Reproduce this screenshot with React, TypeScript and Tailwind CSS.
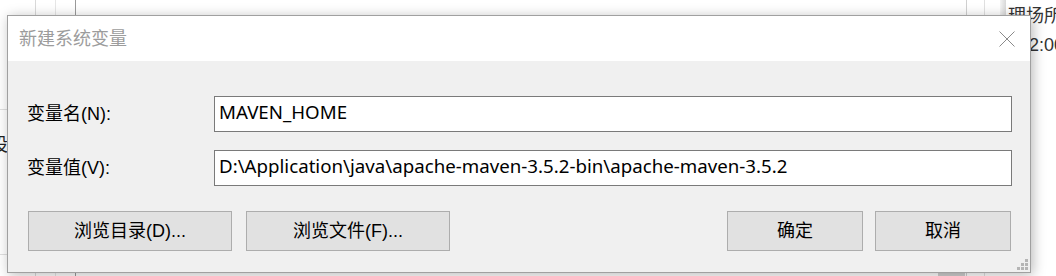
import React from "react";

const font = { fontFamily: '"Liberation Sans", "Noto Sans CJK SC", sans-serif' };
const inputFont = { fontFamily: '"Noto Sans", "Noto Sans CJK SC", sans-serif' };

function Btn({ label, w }: { label: string; w: string }) {
  return (
    <div
      className={`${w} h-[40px] flex items-center justify-center border border-[#adadad] bg-[#e1e1e1] text-[18px] text-black`}
    >
      {label}
    </div>
  );
}

export default function App() {
  return (
    <div className="relative w-[1056px] h-[276px] bg-white overflow-hidden" style={font}>
      {/* background window pieces */}
      <div className="absolute left-[35px] top-0 h-full w-px bg-[#d9d9d9]" />
      <div className="absolute left-[55px] top-0 h-full w-px bg-[#e6e6e6]" />
      <div className="absolute left-[75px] top-0 h-full w-px bg-[#9a9a9a]" />
      <div className="absolute left-0 top-[109px] w-[10px] h-px bg-[#e0e0e0]" />
      <div className="absolute left-0 top-[254px] w-[10px] h-px bg-[#e0e0e0]" />
      <div className="absolute left-[-10px] top-[136px] text-[18px] text-[#222] leading-none">设</div>
      <div className="absolute left-[938px] top-[273px] w-[27px] h-[3px] bg-[#cfcfcf]" />
      <div className="absolute left-[966px] top-0 h-full w-px bg-[#d0d0d0]" />
      <div className="absolute left-[984px] top-0 h-full w-px bg-[#e0e0e0]" />
      <div className="absolute left-[1000px] top-0 h-[15px] w-[6px] bg-gradient-to-r from-[#f4f4f4] to-[#d8d8d8]" />
      <div className="absolute left-[1008px] top-[7px] text-[18px] text-[#333] leading-none whitespace-nowrap">理场所</div>
      <div className="absolute left-[1029px] top-[36px] text-[18px] text-[#333] leading-none whitespace-nowrap">2:00</div>

      {/* dialog */}
      <div className="absolute left-[7px] top-[15px] w-[1024px] h-[258px] border border-[#a0a0a0] bg-[#f0f0f0] flex flex-col shadow-[2px_2px_12px_rgba(0,0,0,0.28)]">
        <div className="h-[45px] bg-white flex items-center justify-between pl-[11px] pr-[15px]">
          <span className="text-[18px] text-[#9c9c9c] leading-none">新建系统变量</span>
          <svg width="16" height="16" viewBox="0 0 16 16">
            <path d="M0.5 0.5 L15.5 15.5 M15.5 0.5 L0.5 15.5" stroke="#8a8a8a" strokeWidth="1" fill="none" />
          </svg>
        </div>
        <div className="flex-1 relative flex flex-col pt-[35px]">
          <div className="flex items-center">
            <div className="w-[206px] pl-[19px] text-[18px] text-black leading-none">变量名(N):</div>
            <div
              className="flex-1 mr-[18px] h-[36px] border border-[#7a7a7a] bg-white flex items-center px-[4px] pb-[3px] text-[18.7px] text-black leading-none whitespace-nowrap"
              style={inputFont}
            >
              MAVEN_HOME
            </div>
          </div>
          <div className="flex items-center mt-[18px]">
            <div className="w-[206px] pl-[19px] text-[18px] text-black leading-none">变量值(V):</div>
            <div
              className="flex-1 mr-[18px] h-[36px] border border-[#7a7a7a] bg-white flex items-center px-[4px] pb-[3px] text-[18.7px] text-black leading-none whitespace-nowrap"
              style={inputFont}
            >
              D:\Application\java\apache-maven-3.5.2-bin\apache-maven-3.5.2
            </div>
          </div>
          <div className="flex items-center mt-[25px] pl-[20px] pr-[19px]">
            <Btn label="浏览目录(D)..." w="w-[204px]" />
            <div className="w-[14px]" />
            <Btn label="浏览文件(F)..." w="w-[204px]" />
            <div className="flex-1" />
            <Btn label="确定" w="w-[136px]" />
            <div className="w-[12px]" />
            <Btn label="取消" w="w-[136px]" />
          </div>
          <svg className="absolute right-[1px] bottom-[1px]" width="12" height="12" viewBox="0 0 12 12">
            <rect x="8" y="0" width="3" height="3" fill="#b5b5b5" />
            <rect x="4" y="4" width="3" height="3" fill="#b5b5b5" />
            <rect x="8" y="4" width="3" height="3" fill="#b5b5b5" />
            <rect x="0" y="8" width="3" height="3" fill="#b5b5b5" />
            <rect x="4" y="8" width="3" height="3" fill="#b5b5b5" />
            <rect x="8" y="8" width="3" height="3" fill="#b5b5b5" />
          </svg>
        </div>
      </div>
    </div>
  );
}
